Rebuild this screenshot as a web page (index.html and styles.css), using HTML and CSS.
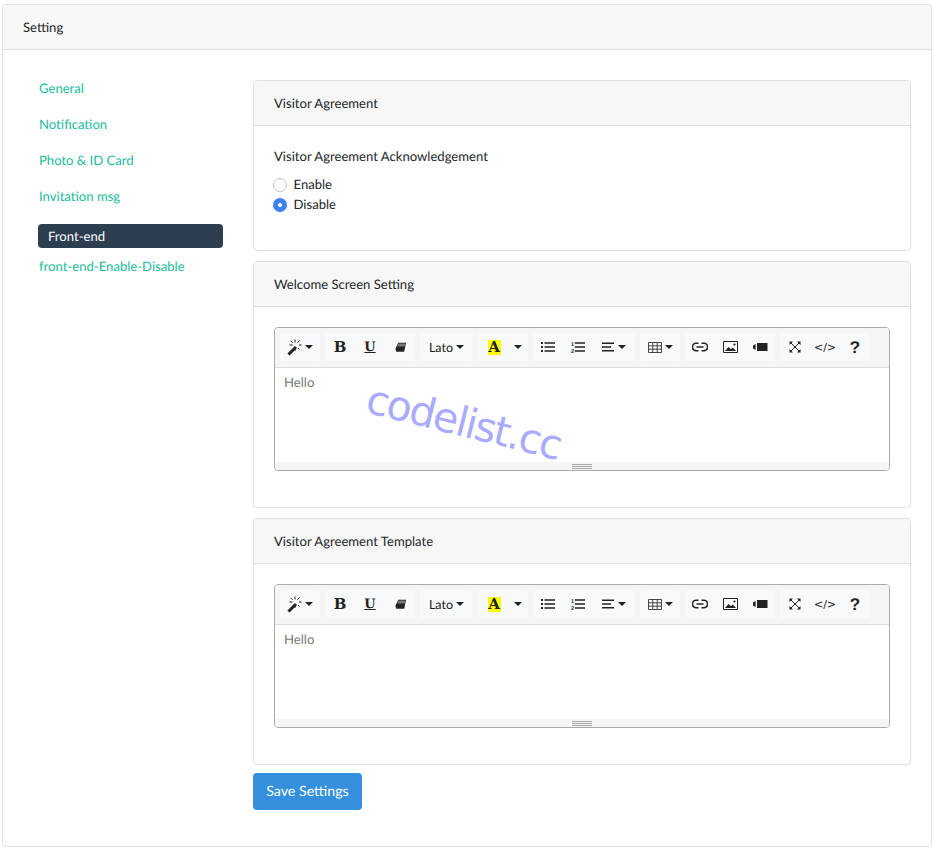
FILE: index.html
```html
<!DOCTYPE html>
<html lang="en">
<head>
<meta charset="utf-8">
<title>Setting</title>
<link rel="stylesheet" href="styles.css">
</head>
<body>
<svg class="defs" xmlns="http://www.w3.org/2000/svg">
  <symbol id="i-wand" viewBox="0 0 18 18">
    <path d="M1.500 16.500 9 9" stroke="#222" stroke-width="3" fill="none"/>
    <path d="M8 1.500v3M8 11v2M2.500 7h3M12 7h2.500M3.500 2.800l2 2M12.500 2.500l-2 2M11 10l1.500 1.500" stroke="#222" stroke-width="1" fill="none"/>
  </symbol>
  <symbol id="i-eraser" viewBox="0 0 14 14">
    <path d="M4.500 2H13L11 11.500H2.500L1.500 8.500Z" fill="#222"/>
    <path d="M4.800 2.800H12.200L11.500 5.800H3.600Z" fill="#777"/>
  </symbol>
  <symbol id="i-ul" viewBox="0 0 14 12">
    <path d="M0 1h2v2H0zM0 5h2v2H0zM0 9h2v2H0z" fill="#222"/>
    <path d="M3.500 1.200H14v1.600H3.500zM3.500 5.200H14v1.600H3.500zM3.500 9.200H14v1.600H3.500z" fill="#222"/>
  </symbol>
  <symbol id="i-ol" viewBox="0 0 14 12">
    <text class="ol-num" x="0" y="5">1</text>
    <text class="ol-num" x="0" y="11.500">2</text>
    <path d="M3.800 1.200H14v1.600H3.800zM3.800 5.200H14v1.600H3.800zM3.800 9.200H14v1.600H3.800z" fill="#222"/>
  </symbol>
  <symbol id="i-align" viewBox="0 0 12 10">
    <path d="M0 .5h12v1.400H0zM0 4.300h9v1.400H0zM0 8.100h12v1.400H0z" fill="#222"/>
  </symbol>
  <symbol id="i-table" viewBox="0 0 14 11">
    <path d="M.5.500h13v10H.5zM.5 3.800h13M.5 7.200h13M4.800.5v10M9.200.5v10" stroke="#333" stroke-width=".9" fill="none"/>
  </symbol>
  <symbol id="i-link" viewBox="0 0 16 10">
    <path d="M6.500 1.200H4.200a3.800 3.800 0 0 0 0 7.600h2.300M9.500 1.200h2.300a3.800 3.800 0 0 1 0 7.600H9.500M4.500 5h7" stroke="#222" stroke-width="1.600" fill="none"/>
  </symbol>
  <symbol id="i-pic" viewBox="0 0 15 12">
    <path d="M.5.500h14v11H.5z" stroke="#222" fill="none"/>
    <path d="M2 10l3.500-4L8 8.200 9.800 6.500 13 10z" fill="#222"/>
    <circle cx="11.500" cy="3.500" r="1.100" fill="#222"/>
  </symbol>
  <symbol id="i-video" viewBox="0 0 15 10">
    <path d="M0 3.500 2.600 2v6L0 6.500z" fill="#222"/>
    <rect x="4" y="1" width="10.500" height="8" fill="#222"/>
  </symbol>
  <symbol id="i-full" viewBox="0 0 12 12">
    <path d="M.5.500h3.500L.5 4zM11.500.500H8L11.500 4zM.5 11.500H4L.5 8zM11.500 11.500H8L11.500 8z" fill="#222"/>
    <path d="M2 2l8 8M10 2l-8 8" stroke="#222" stroke-width="1"/>
  </symbol>
</svg>

<div class="card">
  <div class="card-header">Setting</div>
  <div class="card-body">
    <nav class="side">
      <a class="side-link">General</a>
      <a class="side-link">Notification</a>
      <a class="side-link">Photo &amp; ID Card</a>
      <a class="side-link">Invitation msg</a>
      <a class="side-active">Front-end</a>
      <a class="side-link">front-end-Enable-Disable</a>
    </nav>
    <main class="content">
      <section class="panel">
        <div class="panel-head">Visitor Agreement</div>
        <div class="panel-body panel-body-radio">
          <div class="field-label">Visitor Agreement Acknowledgement</div>
          <label class="radio"><span class="dot"></span>Enable</label>
          <label class="radio"><span class="dot dot-on"></span>Disable</label>
        </div>
      </section>

      <section class="panel">
        <div class="panel-head">Welcome Screen Setting</div>
        <div class="panel-body">
          <div class="editor">
            <div class="toolbar">
              <div class="grp"><span class="btn w40"><svg class="ic ic-wand"><use href="#i-wand"/></svg><i class="caret"></i></span></div>
              <div class="grp">
                <span class="btn w30 glyph-b">B</span>
                <span class="btn w30 glyph-u">U</span>
                <span class="btn w30"><svg class="ic ic-eraser"><use href="#i-eraser"/></svg></span>
              </div>
              <div class="grp"><span class="btn w53 font-name">Lato<i class="caret"></i></span></div>
              <div class="grp">
                <span class="btn w30"><span class="glyph-a">A</span></span>
                <span class="btn w20"><i class="caret"></i></span>
              </div>
              <div class="grp">
                <span class="btn w30"><svg class="ic ic-list"><use href="#i-ul"/></svg></span>
                <span class="btn w30"><svg class="ic ic-list"><use href="#i-ol"/></svg></span>
                <span class="btn w42"><svg class="ic ic-align"><use href="#i-align"/></svg><i class="caret"></i></span>
              </div>
              <div class="grp"><span class="btn w40"><svg class="ic ic-table"><use href="#i-table"/></svg><i class="caret"></i></span></div>
              <div class="grp">
                <span class="btn w30"><svg class="ic ic-link"><use href="#i-link"/></svg></span>
                <span class="btn w30"><svg class="ic ic-pic"><use href="#i-pic"/></svg></span>
                <span class="btn w30"><svg class="ic ic-video"><use href="#i-video"/></svg></span>
              </div>
              <div class="grp">
                <span class="btn w30"><svg class="ic ic-full"><use href="#i-full"/></svg></span>
                <span class="btn w30 glyph-code">&lt;/&gt;</span>
                <span class="btn w30 glyph-q">?</span>
              </div>
            </div>
            <div class="editable">Hello<span class="watermark">codelist.cc</span></div>
            <div class="statusbar"><span class="grip"></span></div>
          </div>
        </div>
      </section>

      <section class="panel">
        <div class="panel-head">Visitor Agreement Template</div>
        <div class="panel-body">
          <div class="editor">
            <div class="toolbar">
              <div class="grp"><span class="btn w40"><svg class="ic ic-wand"><use href="#i-wand"/></svg><i class="caret"></i></span></div>
              <div class="grp">
                <span class="btn w30 glyph-b">B</span>
                <span class="btn w30 glyph-u">U</span>
                <span class="btn w30"><svg class="ic ic-eraser"><use href="#i-eraser"/></svg></span>
              </div>
              <div class="grp"><span class="btn w53 font-name">Lato<i class="caret"></i></span></div>
              <div class="grp">
                <span class="btn w30"><span class="glyph-a">A</span></span>
                <span class="btn w20"><i class="caret"></i></span>
              </div>
              <div class="grp">
                <span class="btn w30"><svg class="ic ic-list"><use href="#i-ul"/></svg></span>
                <span class="btn w30"><svg class="ic ic-list"><use href="#i-ol"/></svg></span>
                <span class="btn w42"><svg class="ic ic-align"><use href="#i-align"/></svg><i class="caret"></i></span>
              </div>
              <div class="grp"><span class="btn w40"><svg class="ic ic-table"><use href="#i-table"/></svg><i class="caret"></i></span></div>
              <div class="grp">
                <span class="btn w30"><svg class="ic ic-link"><use href="#i-link"/></svg></span>
                <span class="btn w30"><svg class="ic ic-pic"><use href="#i-pic"/></svg></span>
                <span class="btn w30"><svg class="ic ic-video"><use href="#i-video"/></svg></span>
              </div>
              <div class="grp">
                <span class="btn w30"><svg class="ic ic-full"><use href="#i-full"/></svg></span>
                <span class="btn w30 glyph-code">&lt;/&gt;</span>
                <span class="btn w30 glyph-q">?</span>
              </div>
            </div>
            <div class="editable">Hello</div>
            <div class="statusbar"><span class="grip"></span></div>
          </div>
        </div>
      </section>

      <button class="save" type="button">Save Settings</button>
    </main>
  </div>
</div>
</body>
</html>
```
FILE: styles.css
```css
* { box-sizing: border-box; }
html, body { margin: 0; padding: 0; }
body {
  background: #fff;
  color: #212529;
  font-family: Lato, "Liberation Sans", sans-serif;
  font-size: 13.100px;
  line-height: 21px;
  padding: 4px 2px 0;
  text-rendering: geometricPrecision;
}
.defs { display: none; }

.card {
  border: 1px solid #dfe0e1;
  border-radius: 4px;
  background: #fff;
}
.card-header {
  height: 45px;
  line-height: 44px;
  padding-left: 20px;
  background: #f7f7f7;
  border-bottom: 1px solid #dfe0e1;
  border-radius: 3px 3px 0 0;
}
.card-body {
  display: flex;
  padding: 20px 20px 36px 35px;
}

.side { width: 185px; flex: none; margin-right: 30px; }
.side-link {
  display: block;
  height: 36px;
  line-height: 36px;
  padding-left: 1px;
  color: #18bc9c;
}
.side-active {
  display: block;
  height: 24px;
  line-height: 24px;
  margin-top: 10px;
  padding-left: 10px;
  color: #fff;
  background: #2c3e50;
  border-radius: 4px;
}

.content { flex: 1; min-width: 0; padding-top: 10px; }
.panel {
  border: 1px solid #dfe0e1;
  border-radius: 4px;
  margin-bottom: 10px;
}
.panel-head {
  height: 45px;
  line-height: 44px;
  padding-left: 20px;
  background: #f7f7f7;
  border-bottom: 1px solid #dfe0e1;
  border-radius: 3px 3px 0 0;
}
.panel-body { padding: 20px 20px 36px; }
.panel-body-radio { height: 124px; }
.field-label { margin-bottom: 7px; }
.radio {
  display: flex;
  align-items: center;
  height: 20px;
  gap: 6.500px;
  margin-left: -1px;
}
.dot {
  width: 14px;
  height: 14px;
  border-radius: 50%;
  border: 1px solid #c4c4c4;
  background: #fff;
  flex: none;
  margin-top: 1px;
}
.dot-on {
  border: 0;
  background: radial-gradient(circle, #fff 0 1.600px, #3b82f6 2.300px);
}

.editor {
  border: 1px solid #a9a9a9;
  border-radius: 4px;
}
.toolbar {
  display: flex;
  gap: 5px;
  height: 40px;
  padding: 5px 5px 0;
  background: #f5f5f5;
  border-bottom: 1px solid #ddd;
  border-radius: 3px 3px 0 0;
}
.grp { display: flex; height: 28px; background: #f8f9fa; border-radius: 3px; }
.btn {
  display: flex;
  align-items: center;
  justify-content: center;
  height: 28px;
  color: #222;
}
.w20 { width: 20px; }
.w30 { width: 30px; }
.w40 { width: 40px; }
.w42 { width: 42px; }
.w53 { width: 53px; }
.caret {
  display: inline-block;
  width: 0;
  height: 0;
  border-left: 4px solid transparent;
  border-right: 4px solid transparent;
  border-top: 4px solid #222;
}
.ic { display: block; flex: none; }
.ic-wand { width: 18px; height: 18px; }
.ic-eraser { width: 13px; height: 13px; }
.ic-list { width: 14px; height: 12px; }
.ic-align { width: 12px; height: 10px; margin-right: 4px; }
.ic-table { width: 14px; height: 11px; margin-right: 3px; }
.ic-link { width: 16px; height: 10px; }
.ic-pic { width: 15px; height: 12px; }
.ic-video { width: 15px; height: 10px; }
.ic-full { width: 12px; height: 12px; }
.ol-num { font-family: "Liberation Sans", sans-serif; font-weight: 700; font-size: 5.500px; fill: #222; }
.glyph-b, .glyph-u, .glyph-a { font-family: "DejaVu Serif", serif; font-weight: 700; }
.glyph-b { font-size: 15px; }
.glyph-u { font-size: 13px; text-decoration: underline; }
.glyph-a {
  display: block;
  width: 13px;
  height: 15px;
  margin-left: 2px;
  line-height: 15px;
  text-align: center;
  font-size: 15px;
  background: #ff0;
  color: #222;
}
.font-name { font-size: 12.500px; gap: 3px; }
.glyph-code { font-family: "DejaVu Sans", sans-serif; font-size: 11px; }
.glyph-q { font-family: "Liberation Sans", sans-serif; font-weight: 700; font-size: 17px; }

.editable {
  position: relative;
  height: 94px;
  padding: 4px 9px;
  color: #777;
  background: #fff;
}
.watermark {
  position: absolute;
  left: 98px;
  top: 8px;
  font-family: "DejaVu Sans", sans-serif;
  font-size: 41px;
  letter-spacing: -1.700px;
  line-height: 46px;
  color: #aaf;
  transform: rotate(14deg);
  transform-origin: left top;
  white-space: nowrap;
}
.statusbar {
  display: flex;
  justify-content: center;
  height: 8px;
  padding-top: 2px;
  background: #f5f5f5;
  border-radius: 0 0 3px 3px;
}
.grip {
  display: block;
  width: 20px;
  height: 5px;
  border-top: 1px solid #a9a9a9;
  border-bottom: 1px solid #a9a9a9;
  background: linear-gradient(#a9a9a9, #a9a9a9) center / 100% 1px no-repeat;
}

.save {
  display: block;
  width: 109px;
  height: 37px;
  margin-top: -2px;
  padding: 0;
  border: 0;
  border-radius: 4px;
  background: #3490dc;
  color: #fff;
  font-family: Lato, "Liberation Sans", sans-serif;
  font-size: 14.200px;
  text-rendering: geometricPrecision;
}
```
